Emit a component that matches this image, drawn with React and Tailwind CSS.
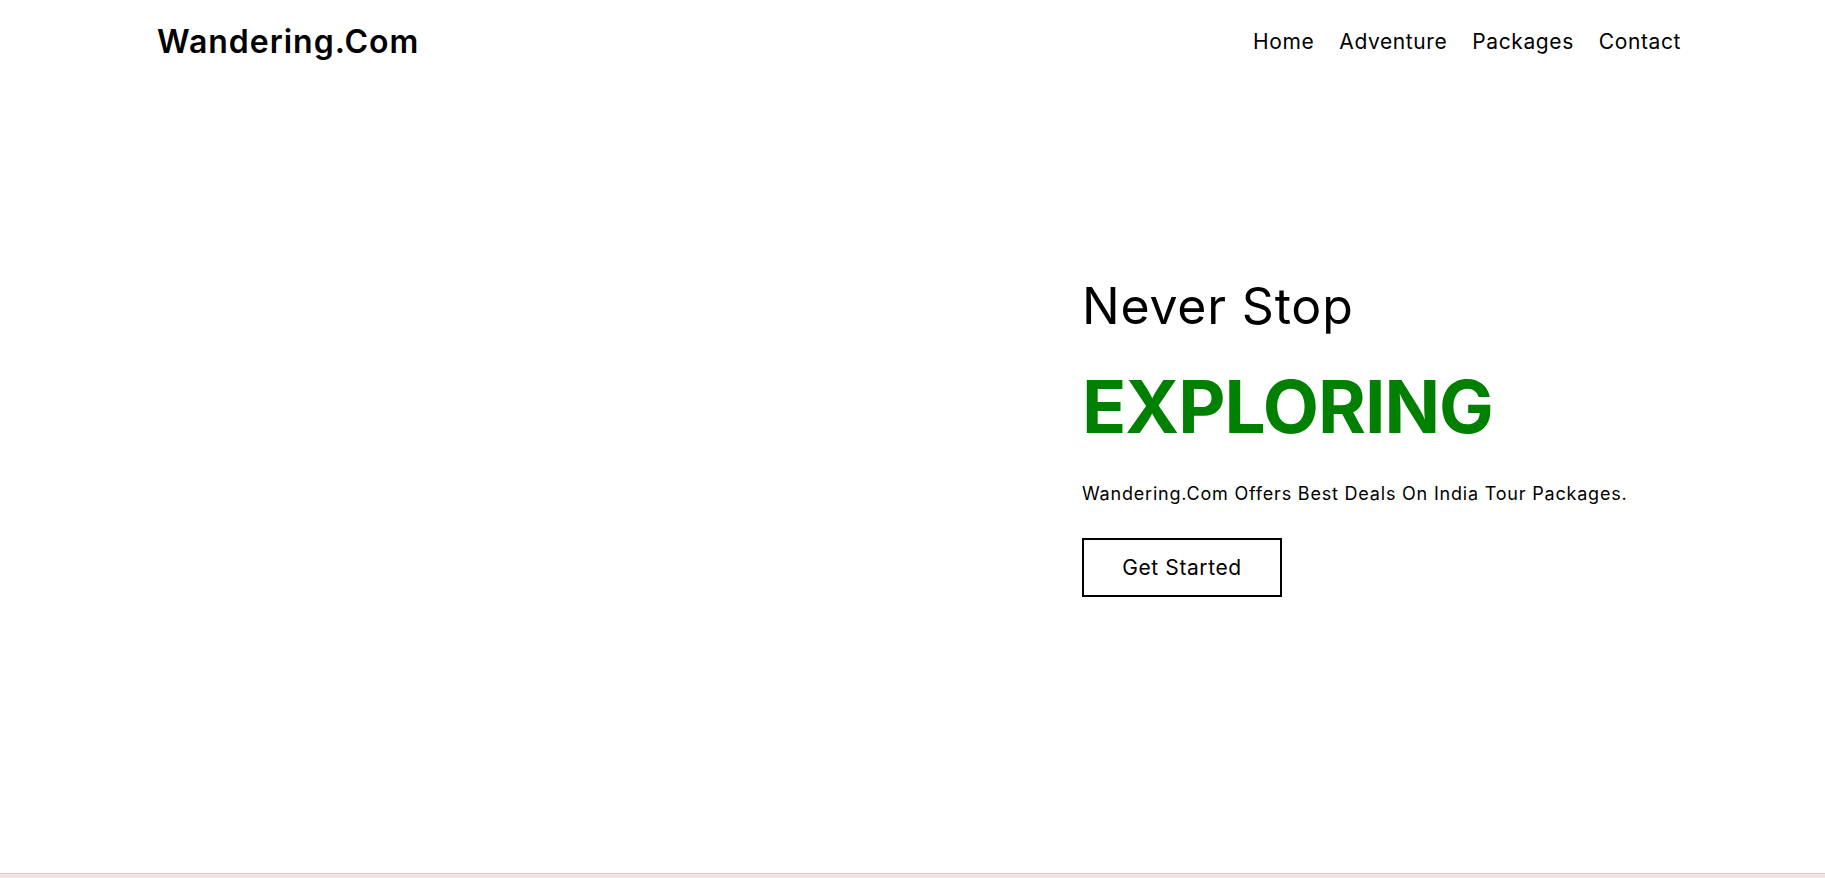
import React from 'react';

const navLinks = ['Home', 'Adventure', 'Packages', 'Contact'];

const App = () => {
  return (
    <div className="min-h-screen bg-white text-black font-['Inter',sans-serif]">
      {/* Header */}
      <nav className="h-[83px] pl-[157px] pr-[144px] flex items-center justify-between">
        <a href="#" className="text-[32px] leading-[40px] font-semibold tracking-[1px]">
          Wandering.Com
        </a>
        <div className="flex items-center gap-[25px]">
          {navLinks.map((name) => (
            <a key={name} href="#" className="text-[21px] leading-[28px] tracking-[0.6px]">
              {name}
            </a>
          ))}
        </div>
      </nav>

      {/* Hero */}
      <section className="h-[790px] flex pl-[157px] pr-[144px] pt-[193px]">
        <div className="w-[925px] shrink-0" />
        <div className="flex flex-col items-start">
          <h2 className="text-[50px] leading-[60px] font-normal tracking-[0.8px]">Never Stop</h2>
          <h1 className="mt-[27px] text-[73px] leading-[88px] font-bold tracking-[-1px] text-[#008000]">
            EXPLORING
          </h1>
          <p className="mt-[29px] text-[18px] leading-[27px] tracking-[0.8px]">
            Wandering.Com Offers Best Deals On India Tour Packages.
          </p>
          <button className="mt-[31px] w-[200px] h-[59px] border-2 border-black text-[21px] tracking-[0.6px] flex items-center justify-center">
            Get Started
          </button>
        </div>
      </section>

      {/* Next section edge */}
      <section className="h-[40px] border-t border-[#d9c9c9] bg-[#f3e3e3]" />
    </div>
  );
};

export default App;
